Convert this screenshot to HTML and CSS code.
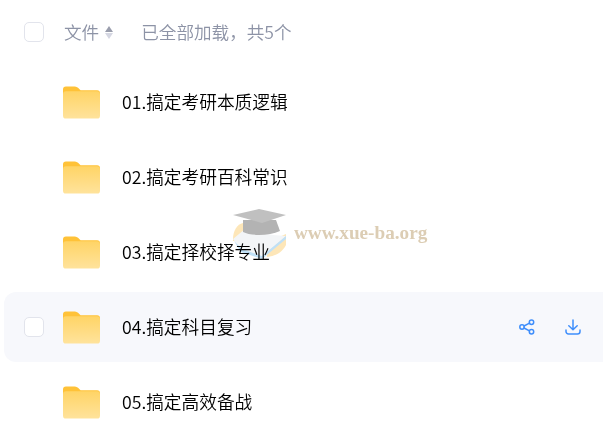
FILE: index.html
```html
<!DOCTYPE html>
<html lang="zh">
<head>
<meta charset="utf-8">
<title>文件</title>
<link rel="stylesheet" href="styles.css">
</head>
<body>
<svg class="defs" width="0" height="0" aria-hidden="true">
  <defs>
    <linearGradient id="fg" x1="0" y1="0" x2="0" y2="1">
      <stop offset="0" stop-color="#ffd466"/>
      <stop offset="1" stop-color="#ffe39c"/>
    </linearGradient>
    <symbol id="folder" viewBox="0 0 38 33">
      <path d="M0 3a3 3 0 0 1 3-3h9c2 0 3 1 4.500 2.300L18 4h17a3 3 0 0 1 3 3v6H0z" fill="#ffc238"/>
      <path d="M0 8a3 3 0 0 1 3-3h32a3 3 0 0 1 3 3v22a3 3 0 0 1-3 3H3a3 3 0 0 1-3-3z" fill="url(#fg)"/>
    </symbol>
  </defs>
</svg>
<main class="list">
  <header class="head">
    <span class="check"></span>
    <span class="col">文件</span>
    <span class="sort"><i class="up"></i><i class="down"></i></span>
    <span class="status">已全部加载，共5个</span>
  </header>
  <div class="row"><svg class="folder"><use href="#folder"/></svg><span class="name">01.搞定考研本质逻辑</span></div>
  <div class="row"><svg class="folder"><use href="#folder"/></svg><span class="name">02.搞定考研百科常识</span></div>
  <div class="row"><svg class="folder"><use href="#folder"/></svg><span class="name">03.搞定择校择专业</span></div>
  <div class="row active">
    <span class="check"></span>
    <svg class="folder"><use href="#folder"/></svg>
    <span class="name">04.搞定科目复习</span>
    <span class="actions">
      <svg class="icon" viewBox="0 0 16 16"><circle cx="3" cy="8" r="2.200"/><circle cx="12.500" cy="3.300" r="2.200"/><circle cx="12.500" cy="12.700" r="2.200"/><path d="M5 7l5.500-2.800M5 9l5.500 2.800"/></svg>
      <svg class="icon" viewBox="0 0 16 16"><path d="M8 1v9.500M3.800 6.800L8 10.800l4.200-4M1 11v1.500A2.500 2.500 0 0 0 3.500 15h9a2.500 2.500 0 0 0 2.500-2.500V11"/></svg>
    </span>
  </div>
  <div class="row"><svg class="folder"><use href="#folder"/></svg><span class="name">05.搞定高效备战</span></div>
</main>
<div class="mark">
  <svg class="cap" viewBox="0 0 54 52">
    <path d="M0 30C0 22 4 15 10 14L18 34 0 32z" fill="#fde6b8"/>
    <path d="M32 34L53 25V36C49 44 42 47 34 48z" fill="#fde6b8"/>
    <path d="M0 30L12 20 40 26 53 27 30 47 8 41z" fill="#f3f5f7"/>
    <path d="M1 32L9 40 29 47 53 27 53 30 29 50 8 43z" fill="#bfe0f6"/>
    <path d="M10 11V23C18 27 36 27 47 22L43 11z" fill="#b3b3b3"/>
    <path d="M0 6L26 0 53 6 29 14z" fill="#c0c0c0"/>
  </svg>
  <span class="url">www.xue-ba.org</span>
</div>
</body>
</html>
```
FILE: styles.css
```css
html, body {
  margin: 0;
  padding: 0;
  background: #fff;
  overflow: hidden;
}
body {
  position: relative;
  width: 603px;
  height: 442px;
  font-family: "Noto Sans CJK SC", "Liberation Sans", sans-serif;
  font-weight: 350;
}
.defs { position: absolute; }
.list { padding: 0 0 0 4px; }
.head {
  display: flex;
  align-items: center;
  height: 64px;
  margin-bottom: 3px;
  padding-left: 20px;
  color: #8d93a6;
  font-size: 17.600px;
}
.check {
  flex: none;
  box-sizing: border-box;
  width: 20px;
  height: 20px;
  background: #fff;
  border: 1px solid #e2e4ec;
  border-radius: 5px;
}
.col { margin-left: 20px; margin-top: -2px; }
.sort {
  display: flex;
  flex-direction: column;
  gap: 1px;
  margin-left: 6px;
}
.sort i {
  display: block;
  width: 0;
  height: 0;
  border-left: 4px solid transparent;
  border-right: 4px solid transparent;
}
.sort .up { border-bottom: 6px solid #9a9ead; }
.sort .down { border-top: 6px solid #d5d7e2; }
.status { margin-left: 28px; margin-top: -2px; }
.row {
  display: flex;
  align-items: center;
  height: 70px;
  margin-bottom: 5px;
  padding-left: 59px;
  border-radius: 12px 0 0 12px;
  color: #000;
  font-size: 17.700px;
}
.active {
  background: #f7f8fc;
  padding-left: 20px;
}
.active .folder { margin-left: 19px; }
.folder {
  flex: none;
  width: 37px;
  height: 33px;
  margin-top: 1px;
}
.name { margin-left: 22px; margin-top: -2px; white-space: nowrap; }
.actions {
  display: flex;
  gap: 30px;
  margin-left: auto;
  margin-right: 22px;
}
.icon {
  width: 16px;
  height: 16px;
  fill: none;
  stroke: #3f8efb;
  stroke-width: 1.500;
  stroke-linecap: round;
  stroke-linejoin: round;
}
.mark {
  position: absolute;
  left: 233px;
  top: 209px;
  display: flex;
  align-items: flex-start;
  mix-blend-mode: multiply;
  pointer-events: none;
}
.cap { width: 54px; height: 52px; }
.url {
  margin-left: 7px;
  margin-top: 13px;
  color: #dccdb4;
  font-family: "Liberation Serif", serif;
  font-size: 19.200px;
  font-weight: 700;
  white-space: nowrap;
}
```
